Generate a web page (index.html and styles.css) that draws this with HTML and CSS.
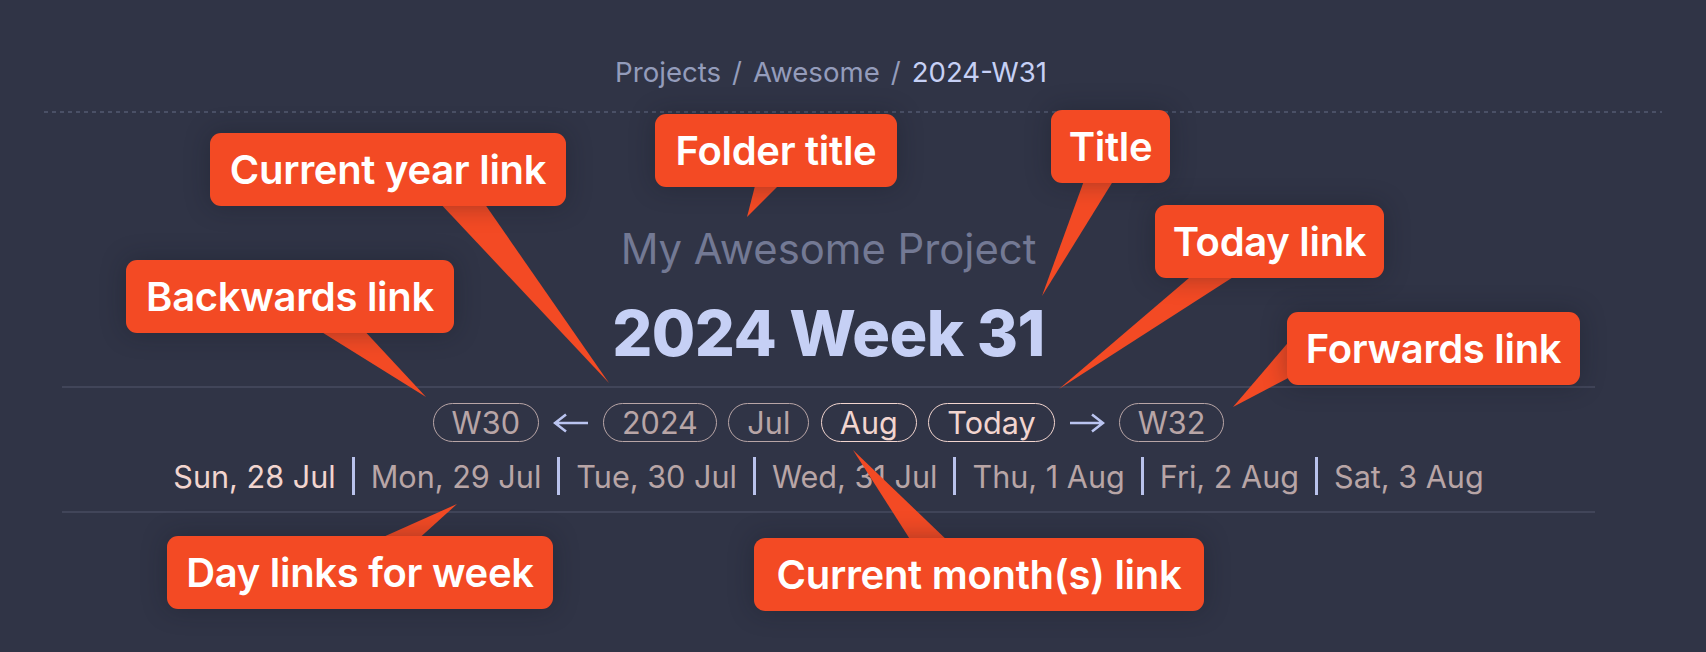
FILE: index.html
```html
<!DOCTYPE html>
<html lang="en">
<head>
<meta charset="utf-8">
<title>2024-W31</title>
<link rel="stylesheet" href="styles.css">
</head>
<body>
<div class="stage">
  <header class="topbar">
    <nav class="crumbs">
      <span class="crumb">Projects</span><span class="sep">/</span><span class="crumb">Awesome</span><span class="sep">/</span><span class="crumb current">2024-W31</span>
    </nav>
  </header>

  <main class="note">
    <div class="folder">My Awesome Project</div>
    <h1 class="title">2024 Week 31</h1>
    <section class="periodic">
      <div class="nav-row">
        <a class="pill">W30</a>
        <svg class="arrow" width="36" height="20" viewBox="0 0 36 20" aria-label="back"><path d="M35 10H2M13 1.5L2 10l11 8.5"/></svg>
        <a class="pill">2024</a>
        <a class="pill">Jul</a>
        <a class="pill active">Aug</a>
        <a class="pill active">Today</a>
        <svg class="arrow" width="36" height="20" viewBox="0 0 36 20" aria-label="forward"><path d="M1 10h33M23 1.5L34 10l-11 8.5"/></svg>
        <a class="pill">W32</a>
      </div>
      <div class="days-row">
        <a class="day active">Sun, 28 Jul</a>
        <span class="bar"></span>
        <a class="day">Mon, 29 Jul</a>
        <span class="bar"></span>
        <a class="day">Tue, 30 Jul</a>
        <span class="bar"></span>
        <a class="day">Wed, 31 Jul</a>
        <span class="bar"></span>
        <a class="day">Thu, 1 Aug</a>
        <span class="bar"></span>
        <a class="day">Fri, 2 Aug</a>
        <span class="bar"></span>
        <a class="day">Sat, 3 Aug</a>
      </div>
    </section>
  </main>

  <svg class="tails" width="1706" height="652" viewBox="0 0 1706 652" aria-hidden="true">
    <polygon points="437,200 482,200 609,383"/>
    <polygon points="312,326 360,326 426,397"/>
    <polygon points="756,182 782,182 747,217"/>
    <polygon points="1085,178 1115,178 1042,296"/>
    <polygon points="1196,272 1241,272 1059,389"/>
    <polygon points="1292,338 1292,376 1233,407"/>
    <polygon points="372,542 415,542 457,504"/>
    <polygon points="913,544 951,544 853,450"/>
  </svg>

  <div class="callout c-year">Current year link</div>
  <div class="callout c-back">Backwards link</div>
  <div class="callout c-folder">Folder title</div>
  <div class="callout c-title">Title</div>
  <div class="callout c-today">Today link</div>
  <div class="callout c-fwd">Forwards link</div>
  <div class="callout c-days">Day links for week</div>
  <div class="callout c-month">Current month(s) link</div>
</div>
</body>
</html>
```

FILE: styles.css
```css
* { box-sizing: border-box; }

html, body {
  margin: 0;
  padding: 0;
  background: #303446;
}

body {
  font-family: Inter, "Noto Sans", sans-serif;
  color: #c6d0f5;
}

.stage {
  position: relative;
  width: 1706px;
  height: 652px;
  overflow: hidden;
}

/* ---------- top bar / breadcrumb ---------- */
.topbar {
  margin: 0 44px;
  height: 113px;
  padding-top: 53px;
  background-image: repeating-linear-gradient(90deg, #4a5066 0 4px, transparent 4px 8px);
  background-size: 100% 2px;
  background-repeat: no-repeat;
  background-position: left bottom;
}

.crumbs {
  display: flex;
  justify-content: center;
  gap: 11px;
  padding-right: 44px;
  font-size: 27.6px;
  line-height: 38px;
  color: #949cbb;
}

.crumb.current { color: #c6d0f5; }

/* ---------- note body ---------- */
.note {
  margin-left: 62px;
  width: 1533px;
  text-align: center;
}

.folder {
  margin-top: 111px;
  font-size: 41.8px;
  line-height: 50px;
  color: #737994;
}

.title {
  margin: 22px 0 0;
  font-size: 63px;
  line-height: 74px;
  font-weight: 800;
  letter-spacing: -0.6px;
  color: #c6d0f5;
}

.periodic {
  margin-top: 16px;
  border-top: 2px solid #414559;
  border-bottom: 2px solid #414559;
  padding: 15px 0 15px;
}

.nav-row {
  display: flex;
  justify-content: center;
  align-items: center;
  gap: 11.5px;
}

.pill {
  display: inline-flex;
  align-items: center;
  height: 39px;
  padding: 0 18px;
  border: 1.8px solid #b8a5a6;
  border-radius: 20px;
  font-size: 30.6px;
  color: #b8a5a6;
}

.pill.active {
  color: #f2d5cf;
  border-color: #f2d5cf;
}

.arrow {
  display: block;
  margin: 0 2.5px;
  fill: none;
  stroke: #bac4f0;
  stroke-width: 2.6;
  stroke-linecap: butt;
  stroke-linejoin: miter;
}

.days-row {
  display: flex;
  justify-content: center;
  align-items: center;
  gap: 16px;
  margin-top: 14px;
  height: 40px;
}

.day {
  font-size: 30.6px;
  color: #b8a5a6;
}

.day.active { color: #f2d5cf; }

.bar {
  width: 3px;
  height: 38px;
  background: #b9c2ec;
}

/* ---------- annotations ---------- */
.tails {
  position: absolute;
  left: 0;
  top: 0;
}

.tails polygon { fill: #f34a24; }

.callout {
  position: absolute;
  display: flex;
  align-items: center;
  justify-content: center;
  height: 73px;
  background: #f34a24;
  border-radius: 11px;
  color: #ffffff;
  font-size: 40px;
  font-weight: 600;
  letter-spacing: -0.3px;
  white-space: nowrap;
  box-shadow: 0 0 24px rgba(20, 22, 34, 0.35);
}

.c-year   { left: 210px;  top: 133px; width: 356px; }
.c-back   { left: 126px;  top: 260px; width: 328px; }
.c-folder { left: 655px;  top: 114px; width: 242px; }
.c-title  { left: 1051px; top: 110px; width: 119px; }
.c-today  { left: 1155px; top: 205px; width: 229px; }
.c-fwd    { left: 1287px; top: 312px; width: 293px; }
.c-days   { left: 167px;  top: 536px; width: 386px; }
.c-month  { left: 754px;  top: 538px; width: 450px; }
```
